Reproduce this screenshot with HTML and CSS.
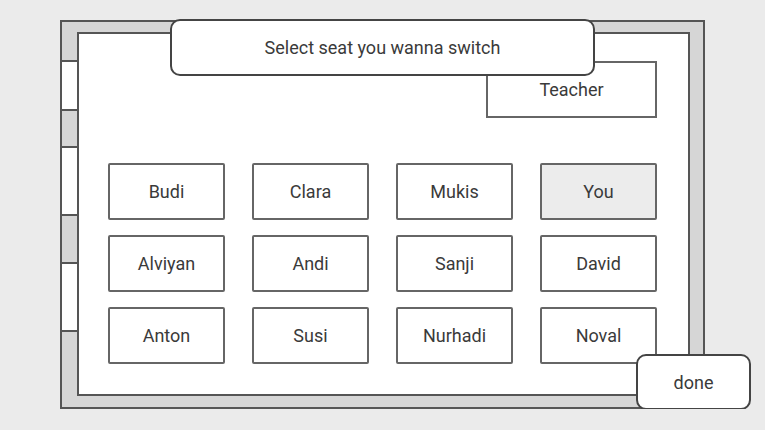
FILE: index.html
```html
<!DOCTYPE html>
<html lang="en">
<head>
  <meta charset="UTF-8">
  <title>Switch Seat</title>
  <link rel="stylesheet" href="styles.css">
</head>
<body>
  <div class="room">
    <div class="window w1"></div>
    <div class="window w2"></div>
    <div class="window w3"></div>

    <div class="floor">
      <div class="teacher">Teacher</div>
      <div class="seats">
        <div class="seat">Budi</div>
        <div class="seat">Clara</div>
        <div class="seat">Mukis</div>
        <div class="seat me">You</div>
        <div class="seat">Alviyan</div>
        <div class="seat">Andi</div>
        <div class="seat">Sanji</div>
        <div class="seat">David</div>
        <div class="seat">Anton</div>
        <div class="seat">Susi</div>
        <div class="seat">Nurhadi</div>
        <div class="seat">Noval</div>
      </div>
    </div>

    <div class="title">Select seat you wanna switch</div>
    <button class="done">done</button>
  </div>
</body>
</html>
```

FILE: styles.css
```css
* { box-sizing: border-box; }
body { margin: 0; background: #ebebeb; font-family: Roboto, "Liberation Sans", sans-serif; font-size: 18px; color: #3a3a3a; }

.room { position: relative; margin: 20px 0 0 60px; width: 645px; height: 389px; background: #d6d6d6; border: 2px solid #555; padding: 10px 13px 11px 15px; }
.floor { height: 100%; background: #fff; border: 2px solid #555; padding: 27px 31px 0 29px; display: flex; flex-direction: column; }

.teacher { align-self: flex-end; width: 171px; height: 57px; border: 2px solid #666; display: flex; align-items: center; justify-content: center; }

.seats { margin-top: 45px; display: grid; grid-template-columns: repeat(4, 117px); grid-auto-rows: 57px; column-gap: 27px; row-gap: 15px; }
.seat { border: 2px solid #666; border-radius: 2px; display: flex; align-items: center; justify-content: center; }
.seat.me { background: #ececec; }

.window { position: absolute; left: -2px; width: 19px; background: #fff; border: 2px solid #555; }
.w1 { top: 38px; height: 51px; }
.w2 { top: 124px; height: 70px; }
.w3 { top: 240px; height: 70px; }

.title { position: absolute; left: 108px; top: -3px; width: 425px; height: 57px; background: #fff; border: 2px solid #444; border-radius: 10px; display: flex; align-items: center; justify-content: center; }
.done { position: absolute; left: 574px; top: 332px; width: 115px; height: 56px; background: #fff; border: 2px solid #444; border-radius: 10px; font-family: inherit; font-size: 18px; color: #3a3a3a; padding: 0; }
```
